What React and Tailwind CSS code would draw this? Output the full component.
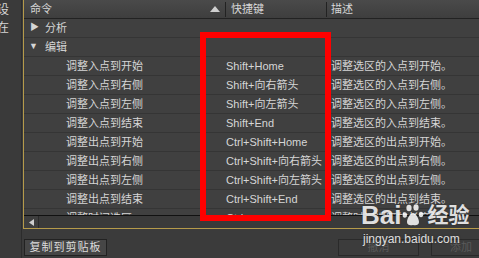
import React from 'react';

const items = [
  ['调整入点到开始', 'Shift+Home', '调整选区的入点到开始。'],
  ['调整入点到右侧', 'Shift+向右箭头', '调整选区的入点到右侧。'],
  ['调整入点到左侧', 'Shift+向左箭头', '调整选区的入点到左侧。'],
  ['调整入点到结束', 'Shift+End', '调整选区的入点到结束。'],
  ['调整出点到开始', 'Ctrl+Shift+Home', '调整选区的出点到开始。'],
  ['调整出点到右侧', 'Ctrl+Shift+向右箭头', '调整选区的出点到右侧。'],
  ['调整出点到左侧', 'Ctrl+Shift+向左箭头', '调整选区的出点到左侧。'],
  ['调整出点到结束', 'Ctrl+Shift+End', '调整选区的出点到结束。'],
  ['调整时间选区', 'Ctrl+...', '调整时间选区的长度并。'],
];

function Row({ children }) {
  return (
    <div className="flex h-[19px] shrink-0 items-center border-b border-[#353535] bg-[#404040] whitespace-nowrap">
      {children}
    </div>
  );
}

export default function App() {
  return (
    <div
      className="relative flex h-[258px] w-[479px] overflow-hidden bg-[#3b3b3b] text-[11px] text-[#d6d6d6]"
      style={{ fontFamily: '"Liberation Sans", "Noto Sans CJK SC", sans-serif' }}
    >
      {/* left strip */}
      <div className="flex w-[22px] shrink-0 flex-col border-r border-[#2c2c2c] bg-[#3a3a3a]">
        <span className="ml-[-3px] mt-[3px] leading-[14px] text-[12px]">设</span>
        <span className="ml-[-3px] mt-[4px] leading-[14px] text-[12px]">在</span>
      </div>

      <div className="flex flex-1 flex-col pl-[1px]">
        {/* table panel */}
        <div className="flex h-[229px] flex-col overflow-hidden border-b border-l border-[#b59a4a]">
          {/* header */}
          <div className="flex h-[19px] shrink-0 items-center border-b border-[#222] bg-gradient-to-b from-[#4a4a4a] to-[#3e3e3e] whitespace-nowrap">
            <div className="flex w-[201px] items-center pl-[6px]">
              <span>命令</span>
              <svg className="ml-auto mr-[5px]" width="10" height="6" viewBox="0 0 10 6">
                <path d="M0 6 L5 0 L10 6 Z" fill="#cfcfcf" />
              </svg>
            </div>
            <div className="h-[15px] w-px bg-[#222]" />
            <div className="w-[100px] pl-[5px]">快捷键</div>
            <div className="h-[15px] w-px bg-[#222]" />
            <div className="pl-[4px]">描述</div>
          </div>

          {/* body */}
          <div className="flex flex-1 flex-col overflow-hidden">
            <Row>
              <span className="ml-[6px] w-[15px] text-[9px]">▶</span>
              <span>分析</span>
            </Row>
            <Row>
              <span className="ml-[5px] w-[16px] text-[9px]">▼</span>
              <span>编辑</span>
            </Row>
            {items.map(([cmd, key, desc]) => (
              <Row key={cmd}>
                <span className="w-[202px] pl-[42px]">{cmd}</span>
                <span className="w-[104px]">{key}</span>
                <span className="pl-[1px]">{desc}</span>
              </Row>
            ))}
          </div>

          {/* horizontal scrollbar */}
          <div className="flex h-[13px] shrink-0 border-t border-[#111] bg-[#343434]">
            <div className="flex w-[15px] items-center justify-center border-r border-[#2a2a2a] bg-[#3e3e3e]">
              <svg width="5" height="7" viewBox="0 0 5 7">
                <path d="M5 0 L0 3.5 L5 7 Z" fill="#cfcfcf" />
              </svg>
            </div>
            <div className="flex-1 bg-[#3a3a3a]" />
          </div>
        </div>

        {/* bottom buttons */}
        <div className="flex items-start pt-[10px]">
          <button className="ml-[1px] h-[17px] w-[83px] border border-[#222] bg-[#464646] text-[11px] leading-[15px] text-[#dcdcdc] tracking-[1px]">
            复制到剪贴板
          </button>
          <button className="ml-[231px] h-[17px] w-[81px] border border-[#2a2a2a] bg-[#3c3c3c] text-[11px] leading-[15px] text-[#5a5a5a]">
            撤消
          </button>
          <button className="ml-[12px] h-[17px] w-[60px] border border-[#2a2a2a] bg-[#3c3c3c] text-[11px] leading-[15px] text-[#5a5a5a]">
            添加
          </button>
        </div>
      </div>

      {/* red highlight box */}
      <div className="pointer-events-none absolute left-[200px] top-[32px] h-[189px] w-[131px] border-[6px] border-[#ff0000]" />

      {/* watermark */}
      <div className="pointer-events-none absolute left-[361px] top-[202px] flex flex-col items-start text-white/85 [text-shadow:0_0_2px_rgba(0,0,0,0.4)]">
        <div className="flex items-center">
          <span className="text-[26px] font-bold leading-[26px]">Bai</span>
          <svg width="22" height="24" viewBox="0 0 22 24" className="mx-[1px]">
            <g fill="rgba(255,255,255,0.85)">
              <ellipse cx="7" cy="5" rx="2.6" ry="3.3" />
              <ellipse cx="14" cy="4.5" rx="2.6" ry="3.3" />
              <ellipse cx="2.8" cy="12" rx="2.2" ry="2.8" />
              <ellipse cx="19" cy="11.5" rx="2.2" ry="2.8" />
              <path d="M11 10 C8 10 5 16 5 19 C5 22.5 8.5 22.5 11 22 C13.5 22.5 17 22.5 17 19 C17 16 14 10 11 10 Z" />
            </g>
          </svg>
          <span className="ml-[2px] text-[21px] font-bold leading-[26px]">经验</span>
        </div>
        <span className="ml-[2px] mt-[5px] text-[12px] leading-[13px]">jingyan.baidu.com</span>
      </div>
    </div>
  );
}
